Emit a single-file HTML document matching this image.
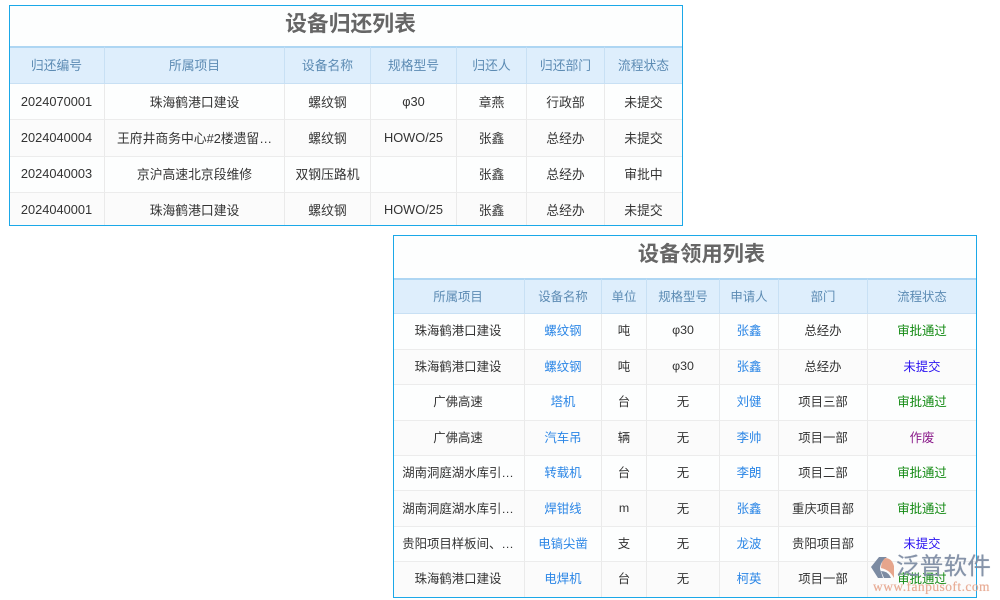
<!DOCTYPE html>
<html lang="zh">
<head>
<meta charset="utf-8">
<style>
html,body{margin:0;padding:0;background:#fff;width:1000px;height:600px;overflow:hidden}
body{position:relative;font-family:"Liberation Sans","Noto Sans CJK SC",sans-serif;color:#333}
.box{position:absolute;box-sizing:border-box;border:1px solid #1ba8e8;background:#fdfefe;overflow:hidden}
.title{position:absolute;right:0;top:0;text-align:center;font-weight:bold;color:#666}
table{position:absolute;left:0;top:0;border-collapse:separate;border-spacing:0;table-layout:fixed}
td,th{padding:0 0 2px;text-align:center;font-weight:normal;white-space:nowrap;overflow:hidden;box-sizing:border-box;border-right:1px solid #eaeaea;border-bottom:1px solid #ececec}
td:last-child,th:last-child{border-right:0}
th{background:#deeefc;color:#5c8bb3;border-right:1px solid #c8e0f4;border-bottom:1px solid #c8e0f4;border-top:2px solid #aed6f3}
tr.e td{background:#fbfbfb}
tr.d td{padding-bottom:0}
tr.h td{padding-bottom:4px}
#a td,#a th{font-size:12.8px}
#b td,#b th{font-size:12.4px}
#b td:first-child,#b th:first-child{padding-right:2px}
#a td:first-child,#a th:first-child{padding-right:1px}
.l{color:#2b86e6}
.g{color:#138a13}
.p{color:#2a12f0}
.v{color:#8a1a8a}
.wm{position:absolute;left:868px;top:550px;width:130px;height:46px;pointer-events:none}
.wm .t{position:absolute;left:28px;top:1px;font-size:23.5px;letter-spacing:.3px;color:#7c8ba2;line-height:30px;font-family:"Liberation Sans","Noto Sans CJK SC",sans-serif;opacity:.92;text-shadow:0 0 .6px #7c8ba2}
.wm .u{position:absolute;left:5px;top:29px;font-size:13.5px;letter-spacing:.45px;color:#e6a58c;line-height:16px;font-family:"Liberation Serif",serif;opacity:.9;text-shadow:0 0 .5px #e6a58c}
.wm svg{position:absolute;left:2px;top:5px}
</style>
</head>
<body>

<div class="box" style="left:9px;top:5px;width:674px;height:221px">
  <div class="title" style="left:9px;font-size:21.8px;line-height:36px">设备归还列表</div>
  <table id="a" style="top:40px;width:672px">
    <colgroup><col style="width:95px"><col style="width:180px"><col style="width:86px"><col style="width:86px"><col style="width:70px"><col style="width:78px"><col style="width:77px"></colgroup>
    <tr style="height:38px"><th>归还编号</th><th>所属项目</th><th>设备名称</th><th>规格型号</th><th>归还人</th><th>归还部门</th><th>流程状态</th></tr>
    <tr class="d" style="height:36px"><td>2024070001</td><td>珠海鹤港口建设</td><td>螺纹钢</td><td>φ30</td><td>章燕</td><td>行政部</td><td>未提交</td></tr>
    <tr class="e" style="height:37px"><td>2024040004</td><td>王府井商务中心#2楼遗留…</td><td>螺纹钢</td><td>HOWO/25</td><td>张鑫</td><td>总经办</td><td>未提交</td></tr>
    <tr style="height:36px"><td>2024040003</td><td>京沪高速北京段维修</td><td>双钢压路机</td><td></td><td>张鑫</td><td>总经办</td><td>审批中</td></tr>
    <tr class="e d" style="height:33px"><td style="border-bottom:0">2024040001</td><td style="border-bottom:0">珠海鹤港口建设</td><td style="border-bottom:0">螺纹钢</td><td style="border-bottom:0">HOWO/25</td><td style="border-bottom:0">张鑫</td><td style="border-bottom:0">总经办</td><td style="border-bottom:0">未提交</td></tr>
  </table>
</div>

<div class="box" style="left:393px;top:235px;width:584px;height:363px">
  <div class="title" style="left:33px;font-size:21.2px;line-height:37px">设备领用列表</div>
  <table id="b" style="top:42px;width:582px">
    <colgroup><col style="width:131px"><col style="width:77px"><col style="width:45px"><col style="width:73px"><col style="width:59px"><col style="width:89px"><col style="width:108px"></colgroup>
    <tr style="height:36px"><th>所属项目</th><th>设备名称</th><th>单位</th><th>规格型号</th><th>申请人</th><th>部门</th><th>流程状态</th></tr>
    <tr class="h" style="height:36px"><td>珠海鹤港口建设</td><td class="l">螺纹钢</td><td>吨</td><td>φ30</td><td class="l">张鑫</td><td>总经办</td><td class="g">审批通过</td></tr>
    <tr class="e" style="height:35px"><td>珠海鹤港口建设</td><td class="l">螺纹钢</td><td>吨</td><td>φ30</td><td class="l">张鑫</td><td>总经办</td><td class="p">未提交</td></tr>
    <tr class="h" style="height:36px"><td>广佛高速</td><td class="l">塔机</td><td>台</td><td>无</td><td class="l">刘健</td><td>项目三部</td><td class="g">审批通过</td></tr>
    <tr class="e" style="height:35px"><td>广佛高速</td><td class="l">汽车吊</td><td>辆</td><td>无</td><td class="l">李帅</td><td>项目一部</td><td class="v">作废</td></tr>
    <tr style="height:35px"><td>湖南洞庭湖水库引…</td><td class="l">转载机</td><td>台</td><td>无</td><td class="l">李朗</td><td>项目二部</td><td class="g">审批通过</td></tr>
    <tr class="e" style="height:36px"><td>湖南洞庭湖水库引…</td><td class="l">焊钳线</td><td>m</td><td>无</td><td class="l">张鑫</td><td>重庆项目部</td><td class="g">审批通过</td></tr>
    <tr style="height:35px"><td>贵阳项目样板间、…</td><td class="l">电镐尖凿</td><td>支</td><td>无</td><td class="l">龙波</td><td>贵阳项目部</td><td class="p">未提交</td></tr>
    <tr class="e h" style="height:36px"><td style="border-bottom:0">珠海鹤港口建设</td><td class="l" style="border-bottom:0">电焊机</td><td style="border-bottom:0">台</td><td style="border-bottom:0">无</td><td class="l" style="border-bottom:0">柯英</td><td style="border-bottom:0">项目一部</td><td class="g" style="border-bottom:0">审批通过</td></tr>
  </table>
</div>

<div class="wm">
  <svg width="26" height="26" viewBox="0 0 26 26">
    <path d="M1 12 L9 2 L17 2 Q10 7 10 14 L13 23 L8 23 Z" fill="#7c8ba2"/>
    <path d="M15 3 Q22 3 24 11 L24 23 Q20 15 11 13 Q11 7 15 3 Z" fill="#e6a58c"/>
    <path d="M11 16 Q18 16 21 23 L14 23 Z" fill="#7c8ba2"/>
  </svg>
  <div class="t">泛普软件</div>
  <div class="u">www.fanpusoft.com</div>
</div>

</body>
</html>
